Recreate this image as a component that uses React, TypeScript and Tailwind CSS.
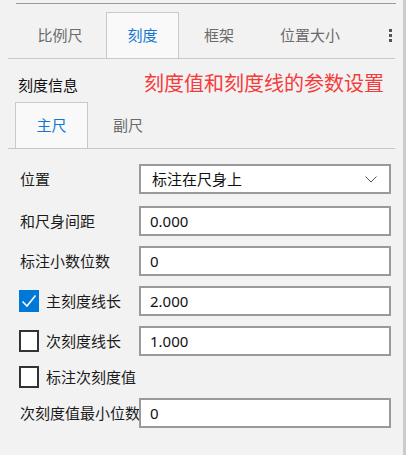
import { useState } from "react";

const font = "font-['Noto_Sans','Noto_Sans_CJK_SC',sans-serif]";

const mainTabs = [
  { label: "比例尺", w: "w-[92px]" },
  { label: "刻度", w: "w-[73px]" },
  { label: "框架", w: "w-[80px]" },
  { label: "位置大小", w: "w-[102px]" },
];

function Check({ checked }: { checked: boolean }) {
  if (checked) {
    return (
      <span className="flex h-[22px] w-[20px] shrink-0 items-center justify-center bg-[#0078d7]">
        <svg width="16" height="14" viewBox="0 0 16 14" fill="none">
          <path d="M1.5 7.5 L6 12 L14.5 1.5" stroke="#fff" strokeWidth="1.6" />
        </svg>
      </span>
    );
  }
  return <span className="h-[22px] w-[20px] shrink-0 border-2 border-[#333] bg-white" />;
}

function Field({ value }: { value: string }) {
  return (
    <div className="flex h-[30px] w-[252px] shrink-0 items-center border-2 border-[#9a9a9a] bg-white pl-[9px] text-[15px] text-[#111]">
      {value}
    </div>
  );
}

export default function App() {
  const [tab, setTab] = useState(1);
  const [sub, setSub] = useState(0);

  return (
    <div className={`flex h-[455px] w-[406px] bg-[#f2f2f2] ${font}`}>
      <div className="flex flex-1 flex-col">
        <div className="ml-[16px] mr-[7px] mt-[3px] h-px bg-[#9a9a9a]" />

        {/* top tabs */}
        <div className="mx-[8px] mt-[8px] flex h-[47px] border-b border-[#c9c9c9] pl-[6px]">
          {mainTabs.map((t, i) => (
            <button
              key={t.label}
              onClick={() => setTab(i)}
              className={`${t.w} flex h-[46px] items-center justify-center text-[15px] ${
                tab === i
                  ? "border-x border-t border-[#c9c9c9] bg-[#f9f9f9] text-[#1377d0]"
                  : "text-[#6b6b6b]"
              }`}
            >
              {t.label}
            </button>
          ))}
          <div className="flex flex-1 items-center justify-end pr-[3px]">
            <div className="flex flex-col gap-[2px]">
              <span className="h-[3px] w-[3px] bg-[#555]" />
              <span className="h-[3px] w-[3px] bg-[#555]" />
              <span className="h-[3px] w-[3px] bg-[#555]" />
            </div>
          </div>
        </div>

        {/* section title */}
        <div className="mt-[13px] flex h-[24px] items-baseline">
          <span className="w-[144px] pl-[18px] text-[15px] text-[#111]">刻度信息</span>
          <span className="text-[20px] leading-[24px] text-[#f53b3b]">刻度值和刻度线的参数设置</span>
        </div>

        {/* sub tabs */}
        <div className="mx-[8px] mt-[6px] flex h-[47px] border-b border-[#c9c9c9] pl-[7px]">
          {["主尺", "副尺"].map((s, i) => (
            <button
              key={s}
              onClick={() => setSub(i)}
              className={`flex h-[46px] items-center justify-center text-[15px] ${
                i === 0 ? "w-[73px]" : "w-[80px]"
              } ${
                sub === i
                  ? "border-x border-t border-[#c9c9c9] bg-[#f9f9f9] text-[#1377d0]"
                  : "text-[#6b6b6b]"
              }`}
            >
              {s}
            </button>
          ))}
        </div>

        {/* form */}
        <div className="mt-[15px] flex flex-col gap-[10px] text-[15px] text-[#1b1b1b]">
          <div className="mb-[2px] flex h-[30px] items-center">
            <span className="w-[139px] shrink-0 pl-[20px]">位置</span>
            <div className="flex h-[30px] w-[252px] items-center justify-between border-2 border-[#9a9a9a] bg-white pl-[11px] pr-[12px] text-[#111]">
              <span>标注在尺身上</span>
              <svg width="12" height="7" viewBox="0 0 12 7" fill="none">
                <path d="M0.5 0.5 L6 6 L11.5 0.5" stroke="#555" strokeWidth="1" />
              </svg>
            </div>
          </div>

          <div className="flex h-[30px] items-center">
            <span className="w-[139px] shrink-0 pl-[20px]">和尺身间距</span>
            <Field value="0.000" />
          </div>

          <div className="flex h-[30px] items-center">
            <span className="w-[139px] shrink-0 pl-[20px]">标注小数位数</span>
            <Field value="0" />
          </div>

          <div className="flex h-[30px] items-center">
            <div className="flex w-[139px] shrink-0 items-center gap-[7px] pl-[19px]">
              <Check checked />
              <span>主刻度线长</span>
            </div>
            <Field value="2.000" />
          </div>

          <div className="flex h-[30px] items-center">
            <div className="flex w-[139px] shrink-0 items-center gap-[7px] pl-[19px]">
              <Check checked={false} />
              <span>次刻度线长</span>
            </div>
            <Field value="1.000" />
          </div>

          <div className="flex h-[22px] items-center gap-[7px] pl-[19px]">
            <Check checked={false} />
            <span>标注次刻度值</span>
          </div>

          <div className="flex h-[30px] items-center">
            <span className="w-[139px] shrink-0 whitespace-nowrap pl-[20px]">次刻度值最小位数</span>
            <Field value="0" />
          </div>
        </div>
      </div>
      <div className="w-[3px] bg-[#cbcbcb]" />
    </div>
  );
}
